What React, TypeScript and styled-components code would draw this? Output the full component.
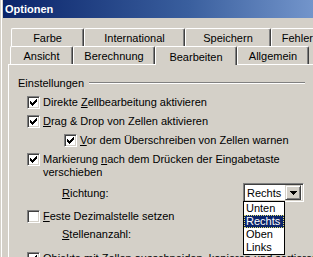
import styled, { createGlobalStyle } from "styled-components";

const GlobalStyle = createGlobalStyle`
  html, body {
    margin: 0;
    padding: 0;
    background: #d4d0c8;
  }
  body {
    font-family: "Liberation Sans", Arial, sans-serif;
    font-size: 11px;
    color: #000;
  }
`;

const Window = styled.div`
  width: 313px;
  height: 257px;
  overflow: hidden;
  box-sizing: border-box;
  padding-left: 3px;
  background: #d4d0c8;
  box-shadow: inset 1px 0 0 #d4d0c8, inset 2px 0 0 #ffffff;
`;

const TitleBar = styled.div`
  height: 18px;
  display: flex;
  align-items: center;
  padding-left: 2px;
  background: linear-gradient(to right, #0a246a 0%, #3a5f9e 60%, #7395cb 100%);
  color: #fff;
  font-weight: bold;
  font-size: 11px;
`;

const Tabs = styled.div`
  padding-top: 10px;
`;

const TabRow = styled.div<{ $indent: number }>`
  display: flex;
  height: 18px;
  padding-left: ${(p) => p.$indent}px;
`;

const Tab = styled.div<{ $w: number; $active?: boolean }>`
  flex: none;
  width: ${(p) => p.$w}px;
  height: ${(p) => (p.$active ? 19 : 18)}px;
  box-sizing: border-box;
  display: flex;
  align-items: center;
  justify-content: center;
  padding-top: 1px;
  white-space: nowrap;
  overflow: hidden;
  background: #d4d0c8;
  border-top: 1px solid #fff;
  border-left: 1px solid #fff;
  border-right: 1px solid #404040;
  border-radius: 2px 2px 0 0;
  box-shadow: inset -1px 0 0 #808080;
  position: relative;
  z-index: ${(p) => (p.$active ? 1 : 0)};
`;

const Panel = styled.div`
  margin-left: 5px;
  border-left: 1px solid #fff;
  border-top: 1px solid #fff;
  padding-right: 8px;
  height: 200px;
`;

const Heading = styled.div`
  display: flex;
  align-items: center;
  gap: 5px;
  height: 13px;
  margin-top: 11px;
  padding-left: 9px;
`;

const Rule = styled.div`
  flex: 1;
  height: 0;
  border-top: 1px solid #808080;
  border-bottom: 1px solid #fff;
`;

const Row = styled.div<{ $indent: number; $top: number }>`
  display: flex;
  align-items: flex-start;
  gap: 3px;
  margin-top: ${(p) => p.$top}px;
  padding-left: ${(p) => p.$indent}px;
  line-height: 13px;
  white-space: nowrap;
`;

const Box = styled.div`
  flex: none;
  width: 13px;
  height: 13px;
  box-sizing: border-box;
  background: #fff;
  border-top: 1px solid #808080;
  border-left: 1px solid #808080;
  border-right: 1px solid #fff;
  border-bottom: 1px solid #fff;
  box-shadow: inset 1px 1px 0 #404040, inset -1px -1px 0 #d4d0c8;
  display: flex;
  align-items: center;
  justify-content: center;
`;

const FieldRow = styled.div<{ $top: number; $h: number }>`
  display: grid;
  grid-template-columns: 181px 61px;
  align-items: center;
  height: ${(p) => p.$h}px;
  margin-top: ${(p) => p.$top}px;
  padding-left: 53px;
`;

const Combo = styled.div`
  position: relative;
  height: 19px;
  box-sizing: border-box;
  background: #fff;
  border-top: 1px solid #808080;
  border-left: 1px solid #808080;
  border-right: 1px solid #fff;
  border-bottom: 1px solid #fff;
  box-shadow: inset 1px 1px 0 #404040, inset -1px -1px 0 #d4d0c8;
  display: flex;
  align-items: center;
  padding: 0 2px 0 3px;
`;

const ComboText = styled.span`
  flex: 1;
`;

const ComboButton = styled.div`
  width: 16px;
  height: 15px;
  box-sizing: border-box;
  background: #d4d0c8;
  border-top: 1px solid #d4d0c8;
  border-left: 1px solid #d4d0c8;
  border-right: 1px solid #404040;
  border-bottom: 1px solid #404040;
  box-shadow: inset 1px 1px 0 #fff, inset -1px -1px 0 #808080;
  display: flex;
  align-items: center;
  justify-content: center;
`;

const List = styled.div`
  position: absolute;
  top: 100%;
  left: -1px;
  width: 42px;
  box-sizing: border-box;
  background: #fff;
  border: 1px solid #000;
  z-index: 5;
`;

const Item = styled.div<{ $selected?: boolean }>`
  height: 13px;
  line-height: 13px;
  padding-left: 2px;
  background: ${(p) => (p.$selected ? "#0a246a" : "#fff")};
  color: ${(p) => (p.$selected ? "#fff" : "#000")};
  outline: ${(p) => (p.$selected ? "1px dotted #e0e070" : "none")};
  outline-offset: -1px;
`;

function Check() {
  return (
    <svg width="7" height="7" viewBox="0 0 7 7" shapeRendering="crispEdges">
      <path
        fill="#000"
        d="M6 0h1v3h-1zM5 1h1v3h-1zM4 2h1v3h-1zM0 2h1v3h-1zM1 3h1v3h-1zM2 4h1v3h-1zM3 3h1v3h-1z"
      />
    </svg>
  );
}

function CheckBox({ checked }: { checked?: boolean }) {
  return <Box>{checked && <Check />}</Box>;
}

function Arrow() {
  return (
    <svg width="7" height="4" viewBox="0 0 7 4" shapeRendering="crispEdges">
      <path fill="#000" d="M0 0h7v1h-7zM1 1h5v1h-5zM2 2h3v1h-3zM3 3h1v1h-1z" />
    </svg>
  );
}

const row1 = [
  { label: "Farbe", w: 73 },
  { label: "International", w: 101 },
  { label: "Speichern", w: 86 },
  { label: "Fehlerprüfung", w: 90 },
];

const row2 = [
  { label: "Ansicht", w: 63 },
  { label: "Berechnung", w: 82 },
  { label: "Bearbeiten", w: 82, active: true },
  { label: "Allgemein", w: 72 },
];

export default function App() {
  return (
    <>
      <GlobalStyle />
      <Window>
        <TitleBar>Optionen</TitleBar>
        <Tabs>
          <TabRow $indent={8}>
            {row1.map((t) => (
              <Tab key={t.label} $w={t.w}>
                {t.label}
              </Tab>
            ))}
          </TabRow>
          <TabRow $indent={7}>
            {row2.map((t) => (
              <Tab key={t.label} $w={t.w} $active={t.active}>
                {t.label}
              </Tab>
            ))}
          </TabRow>
        </Tabs>
        <Panel>
          <Heading>
            <span>Einstellungen</span>
            <Rule />
          </Heading>
          <Row $indent={18} $top={7}>
            <CheckBox checked />
            <span>
              Direkte <u>Z</u>ellbearbeitung aktivieren
            </span>
          </Row>
          <Row $indent={18} $top={6}>
            <CheckBox checked />
            <span>
              <u>D</u>rag &amp; Drop von Zellen aktivieren
            </span>
          </Row>
          <Row $indent={55} $top={6}>
            <CheckBox checked />
            <span>
              <u>V</u>or dem Überschreiben von Zellen warnen
            </span>
          </Row>
          <Row $indent={18} $top={6}>
            <CheckBox checked />
            <span>
              Markierung <u>n</u>ach dem Drücken der Eingabetaste
              <br />
              verschieben
            </span>
          </Row>
          <FieldRow $top={4} $h={19}>
            <span>
              <u>R</u>ichtung:
            </span>
            <Combo>
              <ComboText>Rechts</ComboText>
              <ComboButton>
                <Arrow />
              </ComboButton>
              <List>
                <Item>Unten</Item>
                <Item $selected>Rechts</Item>
                <Item>Oben</Item>
                <Item>Links</Item>
              </List>
            </Combo>
          </FieldRow>
          <Row $indent={18} $top={8}>
            <CheckBox />
            <span>
              <u>F</u>este Dezimalstelle setzen
            </span>
          </Row>
          <FieldRow $top={1} $h={20}>
            <span>
              <u>S</u>tellenanzahl:
            </span>
            <span />
          </FieldRow>
          <Row $indent={18} $top={8}>
            <CheckBox checked />
            <span>
              <u>O</u>bjekte mit Zellen ausschneiden, kopieren und sortieren
            </span>
          </Row>
        </Panel>
      </Window>
    </>
  );
}
